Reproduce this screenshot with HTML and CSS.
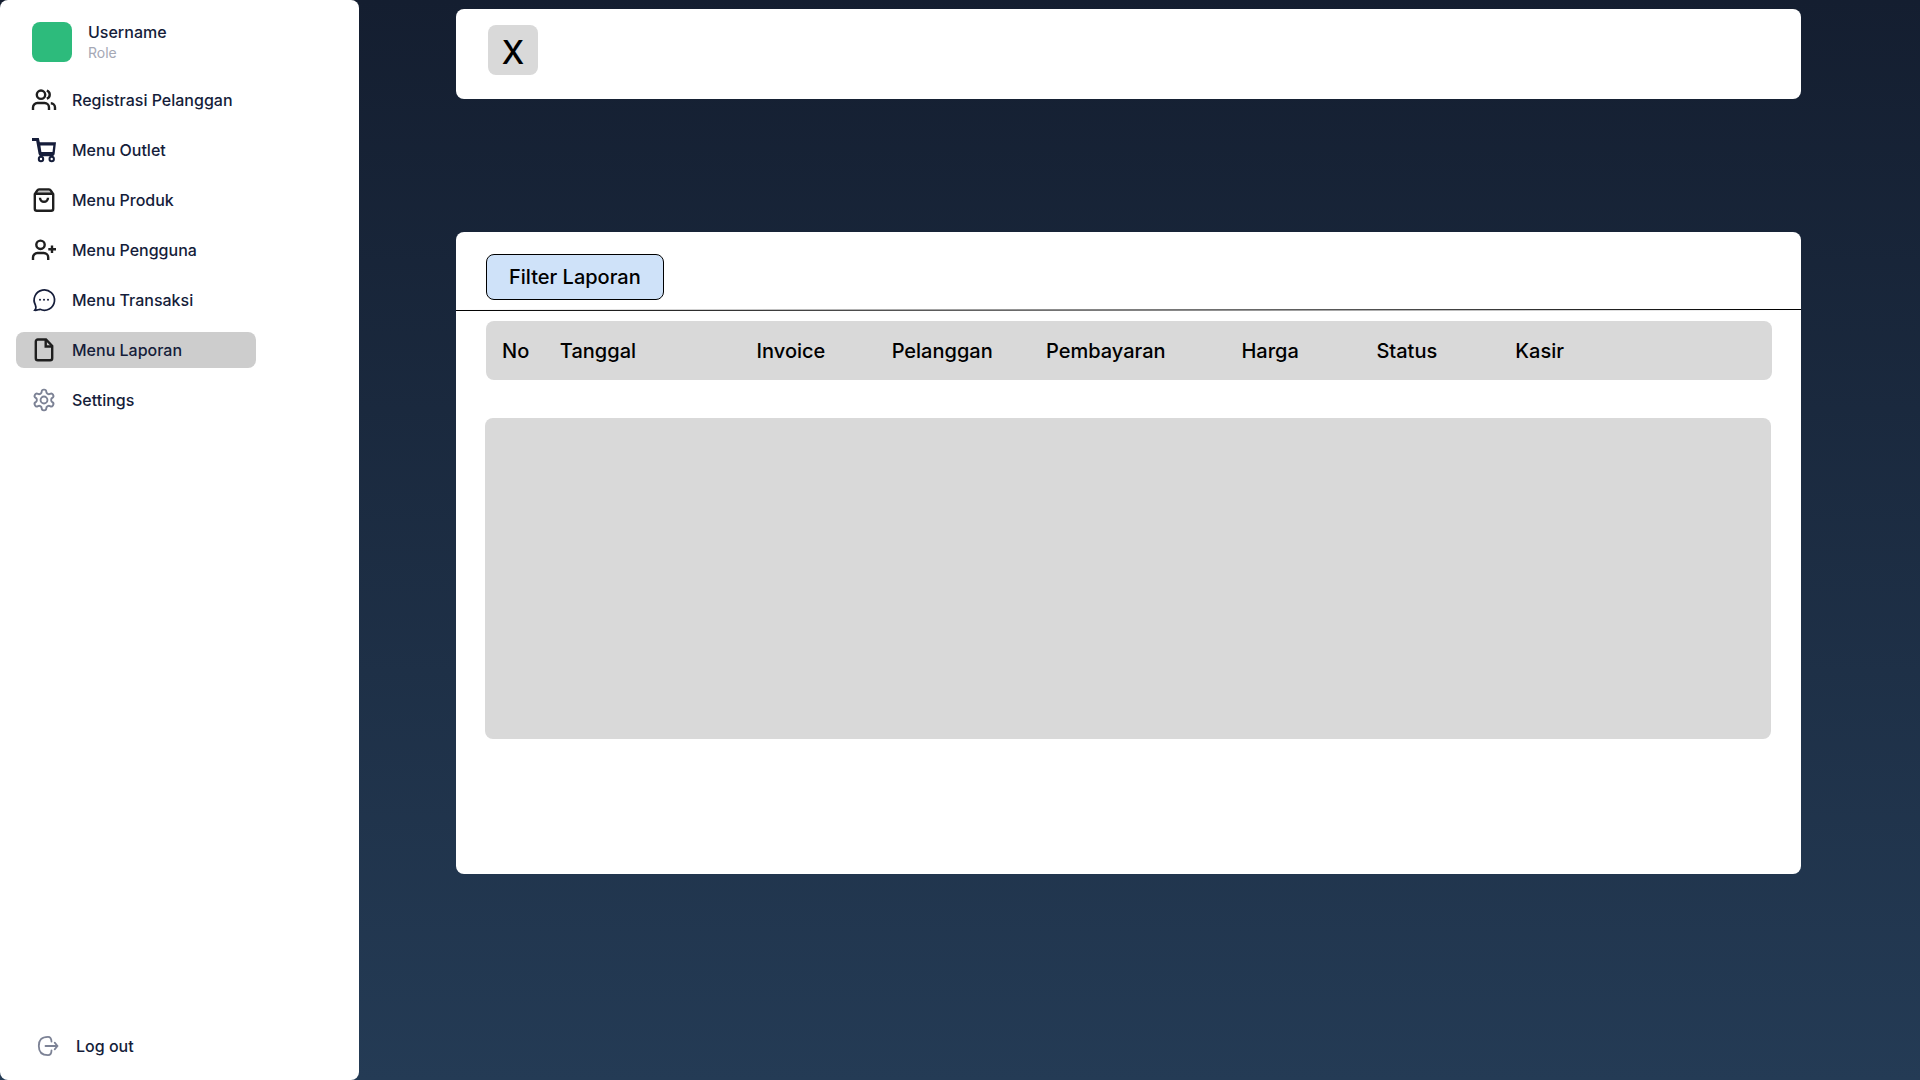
FILE: index.html
```html
<!DOCTYPE html>
<html lang="id">
<head>
<meta charset="utf-8">
<meta name="viewport" content="width=device-width, initial-scale=1">
<title>Menu Laporan</title>
<link rel="stylesheet" href="styles.css">
</head>
<body>
<div class="app">
  <aside class="sidebar">
    <div class="profile">
      <span class="avatar"></span>
      <div class="profile-text">
        <span class="profile-name">Username</span>
        <span class="profile-role">Role</span>
      </div>
    </div>
    <nav class="nav">
      <a class="nav-link" href="#registrasi">
        <svg class="icon icon-dark" viewBox="0 0 24 24"><circle cx="9" cy="6.7" r="4.2"/><path d="M1 22v-2.6A4.4 4.4 0 0 1 5.4 15h7.2a4.4 4.4 0 0 1 4.4 4.4V22M14.800 2.700a4.200 4.200 0 0 1 0 8M18.800 15.200a4.400 4.400 0 0 1 4.200 4.400V22"/></svg>
        Registrasi Pelanggan
      </a>
      <a class="nav-link" href="#outlet">
        <svg class="icon icon-cart" viewBox="0 0 24 24"><path class="solid" fill-rule="evenodd" d="M0 0h6.800l1 4.200H24l-1.300 11.300q-.4 2.800-2.800 2.800H9.300q-2.300 0-2.700-2.400L4.200 3H0zM8.400 7.400l1 6.700h11.100l.8-6.700z"/><circle cx="9" cy="21" r="2.200"/><circle cx="19.700" cy="21" r="2.200"/></svg>
        Menu Outlet
      </a>
      <a class="nav-link" href="#produk">
        <svg class="icon icon-dark" viewBox="0 0 24 24"><path class="bag-lid" d="M3 5.600 6 1.500h12l3 4.100z"/><path d="M2.800 6.200 5.300 2.400a2 2 0 0 1 1.700-1h10a2 2 0 0 1 1.700 1l2.500 3.800v14.500a2 2 0 0 1-2 2H4.800a2 2 0 0 1-2-2zM3 5.800h18M8 9.800a4 4 0 0 0 8 0"/></svg>
        Menu Produk
      </a>
      <a class="nav-link" href="#pengguna">
        <svg class="icon icon-dark" viewBox="0 0 24 24"><circle cx="8.500" cy="6.800" r="4.200"/><path d="M1 22v-2.600A4.400 4.400 0 0 1 5.400 15h6.400a4.400 4.400 0 0 1 4.400 4.400V22M20 7.500v7.600M16.300 11.300H24"/></svg>
        Menu Pengguna
      </a>
      <a class="nav-link" href="#transaksi">
        <svg class="icon icon-chat" viewBox="0 0 24 24"><path d="M3.400 17A10.200 10.200 0 1 1 8 21.300C6 21.700 4.600 22.600 2.700 22.200 4 20.700 4.300 19 3.400 17z"/><path class="dots" d="M8 11.700h.01M12 11.700h.01M16 11.700h.01"/></svg>
        Menu Transaksi
      </a>
      <a class="nav-link nav-link-active" href="#laporan" aria-current="page">
        <svg class="icon icon-dark" viewBox="0 0 24 24"><path d="M14 1.500H5.800a2 2 0 0 0-2 2v16.700a2 2 0 0 0 2 2h12.400a2 2 0 0 0 2-2V8z"/><path d="M13.700 1.800v6.700h6.500"/></svg>
        Menu Laporan
      </a>
      <a class="nav-link" href="#settings">
        <svg class="icon icon-muted" viewBox="0.500 0.500 23 23"><path d="M12.220 2h-.44a2 2 0 0 0-2 2v.18a2 2 0 0 1-1 1.730l-.43.25a2 2 0 0 1-2 0l-.15-.08a2 2 0 0 0-2.730.73l-.22.38a2 2 0 0 0 .73 2.730l.15.1a2 2 0 0 1 1 1.720v.51a2 2 0 0 1-1 1.740l-.15.09a2 2 0 0 0-.73 2.730l.22.38a2 2 0 0 0 2.730.73l.15-.08a2 2 0 0 1 2 0l.43.25a2 2 0 0 1 1 1.730V20a2 2 0 0 0 2 2h.44a2 2 0 0 0 2-2v-.18a2 2 0 0 1 1-1.730l.43-.25a2 2 0 0 1 2 0l.15.08a2 2 0 0 0 2.730-.73l.22-.39a2 2 0 0 0-.73-2.730l-.15-.08a2 2 0 0 1-1-1.740v-.5a2 2 0 0 1 1-1.740l.15-.09a2 2 0 0 0 .73-2.730l-.22-.38a2 2 0 0 0-2.730-.73l-.15.08a2 2 0 0 1-2 0l-.43-.25a2 2 0 0 1-1-1.730V4a2 2 0 0 0-2-2z"/><circle cx="12" cy="12" r="3.300"/></svg>
        Settings
      </a>
    </nav>
    <a class="logout" href="#logout">
      <svg class="icon icon-muted" viewBox="0 0 24 24"><path d="M15.500 7.500C15.400 4.200 14.300 2.800 12 2.800 5.500 2.800 2.800 6 2.800 12s2.700 9.200 9.200 9.200c2.300 0 3.400-1.400 3.500-4.700M9.500 12h12M18.700 8.700 21.500 12l-2.800 3.300"/></svg>
      Log out
    </a>
  </aside>
  <main class="main">
    <header class="panel topbar">
      <button class="close" type="button">X</button>
    </header>
    <section class="panel report">
      <div class="toolbar">
        <button class="filter" type="button">Filter Laporan</button>
      </div>
      <svg class="rule" viewBox="0 0 1345 2" preserveAspectRatio="none"><path d="M0 1.500 1345 .5"/></svg>
      <table class="table">
        <colgroup>
          <col class="col-no"><col class="col-date"><col class="col-invoice"><col class="col-customer"><col class="col-payment"><col class="col-price"><col class="col-status"><col>
        </colgroup>
        <thead>
          <tr><th scope="col">No</th><th scope="col">Tanggal</th><th scope="col">Invoice</th><th scope="col">Pelanggan</th><th scope="col">Pembayaran</th><th scope="col">Harga</th><th scope="col">Status</th><th scope="col">Kasir</th></tr>
        </thead>
      </table>
      <div class="content"></div>
    </section>
  </main>
</div>
</body>
</html>
```
FILE: styles.css
```css
* {
  box-sizing: border-box;
}

body {
  margin: 0;
  font-family: Inter, "Liberation Sans", sans-serif;
  font-size: 16px;
  font-weight: 500;
  line-height: 20px;
  color: #151d3a;
  background: linear-gradient(#141e30, #243b55) no-repeat;
}

button {
  font: inherit;
  color: #000;
  cursor: pointer;
}

a {
  color: inherit;
  text-decoration: none;
}

.app {
  display: grid;
  grid-template-columns: 359px 1fr;
  min-height: 100vh;
}

.sidebar {
  display: flex;
  flex-direction: column;
  padding: 22px 16px;
  background: #fff;
  border-radius: 8px;
}

.profile {
  display: flex;
  gap: 16px;
  height: 40px;
  padding-left: 16px;
}

.avatar {
  width: 40px;
  height: 40px;
  border-radius: 8px;
  background: #2dbb7c;
}

.profile-text {
  display: flex;
  flex-direction: column;
}

.profile-role {
  font-size: 14px;
  font-weight: 400;
  line-height: 22px;
  color: #a5a8b5;
}

.nav {
  display: flex;
  flex-direction: column;
  gap: 14px;
  margin-top: 20px;
}

.nav-link {
  display: flex;
  align-items: center;
  gap: 16px;
  width: 240px;
  height: 36px;
  padding-left: 16px;
  border-radius: 8px;
}

.nav-link-active {
  background: #cdcdcd;
}

.logout {
  display: flex;
  align-items: center;
  gap: 16px;
  margin-top: auto;
  padding-left: 20px;
}

.icon {
  flex: none;
  width: 24px;
  height: 24px;
  overflow: visible;
  fill: none;
  stroke: currentColor;
  stroke-width: 2;
}

.icon-dark {
  color: #1f1f1f;
  stroke-width: 2.4;
}

.icon-cart .solid {
  fill: currentColor;
  stroke: none;
}

.icon-chat {
  stroke-width: 1.7;
}

.icon-chat .dots {
  stroke-width: 2;
  stroke-linecap: round;
}

.icon-muted {
  color: #7c8295;
  stroke-width: 1.8;
  stroke-linecap: round;
  stroke-linejoin: round;
}

.bag-lid {
  fill: #c4c4c4;
  stroke: none;
}

.main {
  padding: 9px 119px 32px 97px;
}

.panel {
  background: #fff;
  border-radius: 8px;
}

.topbar {
  padding: 16px 32px 24px;
}

.close {
  display: block;
  width: 50px;
  height: 50px;
  padding: 6px 0 0;
  border: 0;
  border-radius: 8px;
  background: #d9d9d9;
  font-size: 32px;
}

.report {
  margin-top: 133px;
  padding-bottom: 135px;
  font-size: 20px;
  color: #000;
}

.toolbar {
  padding: 22px 30px 9px;
}

.filter {
  display: block;
  height: 46px;
  padding: 0 22px;
  border: 1px solid #000;
  border-radius: 8px;
  background: #cfe2f9;
}

.rule {
  display: block;
  width: 100%;
  height: 2px;
  stroke: #000;
}

.table {
  width: calc(100% - 59px);
  height: 59px;
  margin: 10px 29px 0 30px;
  table-layout: fixed;
  border-spacing: 0;
  border-radius: 8px;
  background: #d9d9d9;
}

.table th {
  padding: 0 0 0 16px;
  font-weight: 500;
  text-align: left;
}

.col-no {
  width: 4.5%;
}

.col-date {
  width: 15.3%;
}

.col-invoice,
.col-price {
  width: 10.5%;
}

.col-customer {
  width: 12%;
}

.col-payment {
  width: 15.2%;
}

.col-status {
  width: 10.8%;
}

.content {
  height: 321px;
  margin: 38px 30px 0 29px;
  border-radius: 8px;
  background: #d9d9d9;
}
```
